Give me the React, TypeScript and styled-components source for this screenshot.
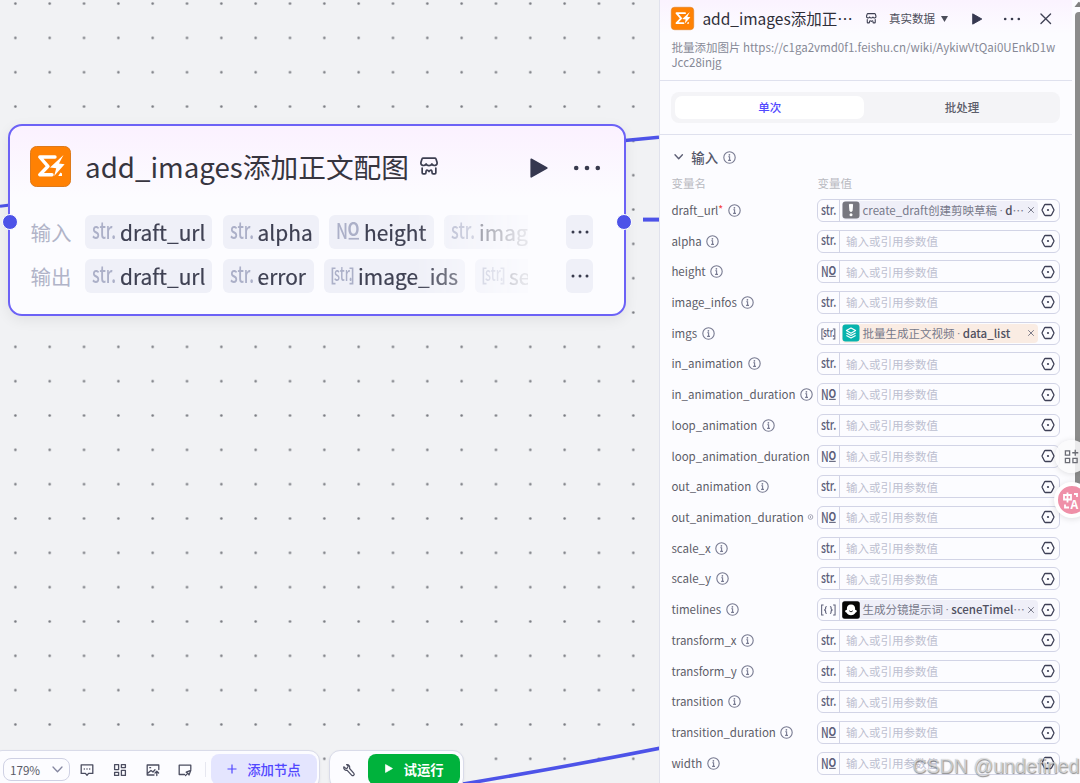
import React from 'react';
import styled, { createGlobalStyle } from 'styled-components';

const Global = createGlobalStyle`
  * { box-sizing: border-box; }
  html, body { margin: 0; padding: 0; overflow: hidden; }
  body { font-family: "Noto Sans CJK SC", "Noto Sans", sans-serif; color: #383743; }
`;

const Page = styled.div`
  position: relative;
  display: grid;
  grid-template-columns: 659px 421px;
  width: 1080px;
  height: 783px;
  overflow: hidden;
  background: #fcfcff;
`;

/* ---------- canvas ---------- */
const Canvas = styled.main`
  position: relative;
  overflow: hidden;
  background-color: #f1f2f4;
  background-image: radial-gradient(circle at 17.17px 17.17px, #75777d 0, #75777d 0.7px, rgba(117, 119, 125, 0) 1.7px);
  background-size: 34.33px 34.33px;
  background-position: -1.8px -13.6px;
`;
const Edges = styled.svg`
  position: absolute;
  left: 0;
  top: 0;
`;
const NodeCard = styled.section`
  position: absolute;
  left: 8.4px;
  top: 124px;
  width: 617.5px;
  height: 191.5px;
  padding: 19px 20px 0 20px;
  border: 2px solid #6c62f6;
  border-radius: 14px;
  background: linear-gradient(#fbf1ff 0, #fcfcff 72px);
  box-shadow: 0 4px 14px rgba(0, 0, 0, 0.07);
`;
const NodeHeader = styled.header`
  display: flex;
  align-items: center;
  height: 42px;
`;
const NodeTitle = styled.h1`
  margin: 0 11px 0 13.7px;
  font-size: 27.7px;
  line-height: 40px;
  font-weight: 400;
  color: #37353f;
  white-space: nowrap;
`;
const Spacer = styled.div`
  flex: 1;
`;
const HeaderActions = styled.div`
  display: flex;
  align-items: center;
  gap: 24.5px;
  padding: 3px 3px 0 0;
`;
const ParamRow = styled.div<{ $top: number }>`
  display: flex;
  align-items: center;
  height: 34px;
  margin-top: ${(p) => p.$top}px;
`;
const ParamLabel = styled.span`
  width: 55px;
  font-size: 20.5px;
  line-height: 34px;
  color: #b1b4c8;
`;
const ChipStrip = styled.div`
  display: flex;
  gap: 10.5px;
  width: 442.5px;
  overflow: hidden;
  mask-image: linear-gradient(90deg, #000 0, #000 330px, rgba(0, 0, 0, 0.12) 438px);
`;
const Chip = styled.span<{ $w: number }>`
  display: flex;
  flex: none;
  align-items: center;
  gap: 3.7px;
  width: ${(p) => p.$w}px;
  height: 34px;
  padding-left: 7px;
  border-radius: 6px;
  background: #eff0f8;
  font-size: 20.9px;
  color: #3f4153;
  -webkit-text-stroke: 0.2px #3f4153;
  white-space: nowrap;
  line-height: 34px;
`;
const MoreChip = styled.span`
  display: grid;
  place-items: center;
  width: 27.5px;
  height: 34px;
  margin-left: 38px;
  border-radius: 6px;
  background: #eff0f8;
`;
const Port = styled.i<{ $x: number }>`
  position: absolute;
  left: ${(p) => p.$x}px;
  top: 213.5px;
  width: 16px;
  height: 16px;
  border: 1px solid #fff;
  border-radius: 50%;
  background: #4d53e8;
`;

/* ---------- bottom toolbars ---------- */
const Dock = styled.div`
  position: absolute;
  left: -8.6px;
  top: 750px;
  display: flex;
  gap: 9px;
`;
const Toolbar = styled.div<{ $w: number; $pad: string }>`
  display: flex;
  align-items: center;
  width: ${(p) => p.$w}px;
  height: 39px;
  padding: ${(p) => p.$pad};
  border: 1px solid #d9dbe9;
  border-radius: 11px;
  background: #fcfcff;
  box-shadow: 0 1px 3px rgba(0, 0, 0, 0.06);
`;
const ZoomSelect = styled.div`
  display: flex;
  align-items: center;
  justify-content: space-between;
  width: 67px;
  height: 23px;
  padding: 0 6px;
  border: 1px solid #cfd1e4;
  border-radius: 8px;
  font-size: 11.7px;
  color: #5a5b68;
`;
const ToolIcons = styled.div`
  display: flex;
  align-items: center;
  gap: 18.7px;
  margin-left: 10.5px;
`;
const Divider = styled.i`
  width: 1px;
  height: 15px;
  margin: 0 5px 0 12.5px;
  background: #e6e7f0;
`;
const ToolButton = styled.button<{ $w: number; $green?: boolean }>`
  display: flex;
  align-items: center;
  justify-content: center;
  gap: ${(p) => (p.$green ? 11 : 10)}px;
  width: ${(p) => p.$w}px;
  height: 31px;
  padding: 0 0 1.4px 0;
  border: 0;
  border-radius: 8px;
  background: ${(p) => (p.$green ? '#00b23c' : '#e4e5fe')};
  color: ${(p) => (p.$green ? '#fff' : '#5147ff')};
  font: ${(p) => (p.$green ? 700 : 500)} 13.4px "Noto Sans CJK SC", sans-serif;
`;

/* ---------- side panel ---------- */
const Panel = styled.aside`
  position: relative;
  z-index: 1;
  display: grid;
  grid-template-columns: 412px 9px;
  height: 783px;
  border-left: 1px solid #e0e2ec;
  background: #fcfcff;
`;
const PanelBody = styled.div`
  display: flex;
  flex-direction: column;
  min-width: 0;
`;
const PanelHead = styled.header`
  height: 80.5px;
  padding: 7px 12px 0 11.4px;
  border-bottom: 1px solid #dfe1ee;
  background: linear-gradient(#fbf3ff 0, #fcfcff 34px);
`;
const HeadLine = styled.div`
  display: flex;
  align-items: center;
  height: 23px;
`;
const PanelTitle = styled.h2`
  width: 151px;
  margin: 0 0 0 8px;
  font-size: 15.5px;
  line-height: 23px;
  font-weight: 400;
  color: #2f2e38;
  white-space: nowrap;
`;
const Gap = styled.span<{ $w: number }>`
  flex: none;
  width: ${(p) => p.$w}px;
`;
const DataMode = styled.span`
  display: flex;
  align-items: center;
  gap: 6px;
  margin: 0 24.5px 0 12px;
  font-size: 11.5px;
  line-height: 23px;
  color: #4c4d5a;
`;
const Description = styled.p`
  margin: 10px 0 0;
  font-size: 11.5px;
  line-height: 15.4px;
  color: #868996;
  white-space: pre;
`;
const ModeBar = styled.div`
  height: 54.5px;
  padding: 11.5px 12.5px 0 10.7px;
  border-bottom: 1px solid #dfe1ee;
`;
const Segments = styled.div`
  display: flex;
  height: 31px;
  padding: 4px;
  border-radius: 8px;
  background: #f4f4f7;
`;
const Segment = styled.div<{ $active?: boolean }>`
  flex: ${(p) => (p.$active ? '0 0 189px' : '1')};
  padding-left: ${(p) => (p.$active ? 1 : 5)}px;
  border-radius: 7px;
  background: ${(p) => (p.$active ? '#fff' : 'transparent')};
  color: ${(p) => (p.$active ? '#5147ff' : '#5c5d6a')};
  font-size: 11.5px;
  font-weight: 500;
  line-height: 23px;
  text-align: center;
`;
const SectionTitle = styled.div`
  display: flex;
  align-items: center;
  gap: 4.5px;
  height: 20px;
  margin-top: 12px;
  padding-left: 12.8px;
  font-size: 13.4px;
  font-weight: 500;
  line-height: 20px;
  color: #55576a;
`;
const ColumnHeads = styled.div`
  display: grid;
  grid-template-columns: 146px 1fr;
  height: 18px;
  margin: 6.5px 0 7.3px;
  padding-left: 11.4px;
  font-size: 11.5px;
  line-height: 18px;
  color: #b9bac1;
`;
const FieldList = styled.div`
  display: flex;
  flex-direction: column;
  gap: 7.72px;
  padding: 0 12px 0 11.4px;
`;
const Field = styled.div`
  display: grid;
  grid-template-columns: 146px 1fr;
  height: 23px;
`;
const FieldName = styled.div`
  display: flex;
  align-items: center;
  gap: 4.5px;
  font-size: 11.5px;
  line-height: 23px;
  color: #5c5d68;
  white-space: nowrap;
`;
const Star = styled.b`
  margin-left: -4.5px;
  font-size: 10px;
  font-weight: 500;
  line-height: 20px;
  align-self: flex-start;
  color: #f54a45;
`;
const InputBox = styled.div`
  display: flex;
  align-items: center;
  min-width: 0;
  height: 23px;
  margin-left: -0.6px;
  border: 1px solid #d2d4e6;
  border-radius: 6px;
`;
const TypeCell = styled.span`
  display: grid;
  flex: none;
  place-items: center;
  width: 22px;
  height: 21px;
  padding: 1px 0 0 0.8px;
  border-right: 1px solid #d2d4e6;
`;
const Placeholder = styled.span`
  flex: 1;
  padding: 0.6px 0 0 6.2px;
  font-size: 11.5px;
  line-height: 21px;
  color: #bdbfd0;
`;
const Ref = styled.span<{ $warm?: boolean }>`
  display: flex;
  flex: none;
  align-items: center;
  width: 196px;
  height: 19px;
  margin: 0 3px 0 2.7px;
  padding-right: 4px;
  border-radius: 4px;
  background: ${(p) => (p.$warm ? '#faece3' : '#efeff8')};
  font-size: 11.5px;
  line-height: 19px;
  color: #77798a;
  white-space: nowrap;
`;
const RefText = styled.span`
  display: flex;
  flex: 1;
  min-width: 0;
  padding-left: 2px;
`;
const RefDot = styled.span`
  width: 8.2px;
  text-align: center;
  font-family: "Liberation Sans", sans-serif;
`;
const RefKey = styled.b`
  font-weight: 500;
  color: #4f5060;
`;
const ScrollTrack = styled.div`
  display: flex;
  flex-direction: column;
  align-items: flex-end;
`;
const ScrollThumb = styled.i`
  width: 6.5px;
  height: 491px;
  margin-top: 3px;
  border-radius: 4px 0 0 4px;
  background: #8b8b8b;
`;
const FloatButton = styled.div<{ $top: number; $left: number; $size: number; $ring: number; $bg: string }>`
  position: absolute;
  z-index: 2;
  left: ${(p) => p.$left}px;
  top: ${(p) => p.$top}px;
  display: grid;
  place-items: center;
  width: ${(p) => p.$size}px;
  height: ${(p) => p.$size}px;
  border: ${(p) => p.$ring}px solid #fff;
  border-radius: 50%;
  background: ${(p) => p.$bg};
  box-shadow: 0 1px 6px rgba(0, 0, 0, 0.12);
`;
const Watermark = styled.div`
  position: absolute;
  z-index: 3;
  left: 912.5px;
  top: 752px;
  font: 19.6px/28px "Liberation Sans", Arial, sans-serif;
  color: rgba(255, 255, 255, 0.55);
  text-shadow: 0.6px 0.6px 1px rgba(80, 80, 80, 0.65), -0.3px -0.3px 0.8px rgba(90, 90, 90, 0.4);
  white-space: nowrap;
`;

/* ---------- icons ---------- */
const Glyph = styled.svg`
  display: block;
  flex: none;
  overflow: visible;
`;
const PluginLogo = ({ size }: { size: number }) => (
  <Glyph width={size} height={size} viewBox="0 0 41 41">
    <rect x="0.5" y="0.5" width="40" height="40" rx="6" fill="#ff8103" stroke="#dd7a1c" />
    <path d="M25 11H9.8L18 20.3L9.8 28.8H22" fill="none" stroke="#fff" strokeWidth="3.4" strokeLinejoin="round" strokeLinecap="round" />
    <path d="M33.5 9L20 21.5L26.2 22.2L24.2 30L34.6 18.2L29 17.4Z" fill="#fff" />
    <path d="M30.5 26.5L32 27.5V30H28.2Z" fill="#fff" />
  </Glyph>
);
const StoreIcon = ({ size, w = 1.9 }: { size: number; w?: number }) => (
  <Glyph width={size} height={size} viewBox="0 0 20 20" fill="none" stroke="#3d3f52" strokeWidth={w} strokeLinejoin="round" strokeLinecap="round">
    <path d="M3.6 1.2H16.4Q17.4 1.2 17.8 2.2L19 6.2C19.4 9.6 15 10.6 13.2 7.8C11.8 10.2 8.2 10.2 6.8 7.8C5 10.6 0.6 9.6 1 6.2L2.2 2.2Q2.6 1.2 3.6 1.2Z" />
    <path d="M2.4 12.4V17.6Q2.4 18.8 3.6 18.8H5.4Q6.6 18.8 6.6 17.6C6.6 13.4 8.6 14.4 10 16.2C11.4 14.4 13.4 13.4 13.4 17.6Q13.4 18.8 14.6 18.8H16.4Q17.6 18.8 17.6 17.6V12.4" />
  </Glyph>
);
const PlayIcon = ({ w, h, color }: { w: number; h: number; color: string }) => (
  <Glyph width={w} height={h} viewBox="0 0 18 20">
    <path d="M1.2 1.2L16.8 10L1.2 18.8Z" fill={color} stroke={color} strokeWidth="1.6" strokeLinejoin="round" />
  </Glyph>
);
const Dots = ({ w, r, step }: { w: number; r: number; step: number }) => (
  <Glyph width={w} height="8" viewBox={`0 0 ${w} 8`} fill="#383a4d">
    <circle cx={w / 2 - step} cy="4" r={r} />
    <circle cx={w / 2} cy="4" r={r} />
    <circle cx={w / 2 + step} cy="4" r={r} />
  </Glyph>
);
const InfoIcon = () => (
  <Glyph width="13" height="13" viewBox="0 0 13 13" fill="none" stroke="#777a91">
    <circle cx="6.5" cy="6.5" r="5.7" strokeWidth="1.1" />
    <path d="M5.3 5.8H6.6V9.3M5.1 9.4H8" strokeWidth="1.1" />
    <circle cx="6.4" cy="3.8" r="0.85" fill="#777a91" stroke="none" />
  </Glyph>
);
const HexIcon = () => (
  <Glyph width="14" height="14" viewBox="0 0 14 14">
    <path d="M4.3 1.5H9.7Q10.2 1.5 10.5 2L12.8 6.5Q13 7 12.8 7.5L10.5 12Q10.2 12.5 9.7 12.5H4.3Q3.8 12.5 3.5 12L1.2 7.5Q1 7 1.2 6.5L3.5 2Q3.8 1.5 4.3 1.5Z" fill="none" stroke="#3d3f55" strokeWidth="1.3" />
    <circle cx="7" cy="7" r="1.1" fill="#3d3f55" />
  </Glyph>
);
const HexSlot = styled.span`
  flex: none;
  margin: 0 3.6px 0 auto;
`;
type Kind = 'str' | 'no' | 'arr' | 'obj';
const TypeIcon = ({ kind, scale, color }: { kind: Kind; scale: number; color: string }) => {
  const w = kind === 'arr' || kind === 'obj' ? 23 : 24;
  return (
    <Glyph width={w * scale} height={22 * scale} viewBox={`0 0 ${w} 22`} fill={color} fontFamily='"Noto Sans CJK SC", sans-serif'>
      {kind === 'str' && <text x="0" y="17.6" fontSize="22.5" fontWeight="500" textLength="24" lengthAdjust="spacingAndGlyphs">str.</text>}
      {kind === 'no' && (
        <>
          <text x="0" y="18.4" fontSize="22" fontWeight="500" textLength="12" lengthAdjust="spacingAndGlyphs">N</text>
          <text x="11.6" y="15.4" fontSize="18" fontWeight="700" textLength="12" lengthAdjust="spacingAndGlyphs">O</text>
          <rect x="12.6" y="16.9" width="10.4" height="1.7" />
        </>
      )}
      {kind === 'arr' && (
        <>
          <path d="M4.5 3.2H1.4V18.6H4.5M18.5 3.2H21.6V18.6H18.5" fill="none" stroke={color} strokeWidth="1.6" />
          <text x="3" y="16" fontSize="19.5" fontWeight="500" textLength="18.5" lengthAdjust="spacingAndGlyphs">str.</text>
        </>
      )}
      {kind === 'obj' && (
        <>
          <path d="M4 3.2H1V18.6H4M19 3.2H22V18.6H19" fill="none" stroke={color} strokeWidth="1.6" />
          <path d="M9 5.4Q7.2 5.4 7.2 7.2V9.2L5.6 10.9L7.2 12.6V14.6Q7.2 16.4 9 16.4M14 5.4Q15.8 5.4 15.8 7.2V9.2L17.4 10.9L15.8 12.6V14.6Q15.8 16.4 14 16.4" fill="none" stroke={color} strokeWidth="1.7" />
        </>
      )}
    </Glyph>
  );
};
const Badge = ({ kind }: { kind: 'draft' | 'batch' | 'bot' }) => (
  <Glyph width="18" height="18" viewBox="0 0 18 18">
    {kind === 'draft' && (
      <>
        <rect x="0.5" y="0.5" width="17" height="17" rx="3" fill="#77777f" />
        <path d="M7.4 3.4H10.6L10 10.2H8Z" fill="#fff" stroke="#fff" strokeLinejoin="round" />
        <circle cx="9" cy="13.8" r="1.5" fill="#fff" />
      </>
    )}
    {kind === 'batch' && (
      <>
        <rect x="0.5" y="0.5" width="17" height="17" rx="3" fill="#06b3ad" />
        <path d="M9 4L13.6 6.6L9 9.2L4.4 6.6ZM4.4 9L9 11.6L13.6 9M4.4 11.4L9 14L13.6 11.4" fill="none" stroke="#fff" strokeWidth="1.1" strokeLinejoin="round" />
      </>
    )}
    {kind === 'bot' && (
      <>
        <rect x="0.2" y="0.2" width="17.6" height="17.6" rx="2.5" fill="#050505" />
        <path d="M9 3.4C11.9 3.4 13.1 5.2 13.1 7.4V8.8C15 9 15.6 11 13.6 11.4C13 13 11 14.2 9 14.2C7 14.2 5 13 4.4 11.4C2.4 11 3 9 4.9 8.8V7.4C4.9 5.2 6.1 3.4 9 3.4Z" fill="#fff" />
        <path d="M7.2 9.8Q9 12 10.8 9.8" fill="none" stroke="#111" strokeWidth="0.9" />
      </>
    )}
  </Glyph>
);
const CloseX = ({ size, w, color }: { size: number; w: number; color: string }) => (
  <Glyph width={size} height={size} viewBox="0 0 12 12" stroke={color} strokeWidth={w} strokeLinecap="round">
    <path d="M1 1L11 11M11 1L1 11" />
  </Glyph>
);
const ToolGlyph = ({ d, dot }: { d: string; dot?: boolean }) => (
  <Glyph width="14" height="14" viewBox="0 0 14 14" fill="none" stroke="#4b4d60" strokeWidth="1.3" strokeLinejoin="round" strokeLinecap="round">
    <path d={d} />
    {dot && <path d="M4.3 5.9V6M7 5.9V6M9.7 5.9V6" strokeWidth="1.5" />}
  </Glyph>
);

/* ---------- data ---------- */
type Param = { kind: Kind; name: string; w: number };
const inputs: Param[] = [
  { kind: 'str', name: 'draft_url', w: 127 },
  { kind: 'str', name: 'alpha', w: 96 },
  { kind: 'no', name: 'height', w: 104.5 },
  { kind: 'str', name: 'image_infos', w: 156 },
];
const outputs: Param[] = [
  { kind: 'str', name: 'draft_url', w: 127 },
  { kind: 'str', name: 'error', w: 91 },
  { kind: 'arr', name: 'image_ids', w: 140.5 },
  { kind: 'arr', name: 'segment_ids', w: 156 },
];
type FieldDef = {
  name: string;
  kind: Kind;
  required?: boolean;
  info?: 'none' | 'tiny';
  value?: { badge: 'draft' | 'batch' | 'bot'; source: string; key: string; more?: boolean; warm?: boolean };
};
const fields: FieldDef[] = [
  { name: 'draft_url', kind: 'str', required: true, value: { badge: 'draft', source: 'create_draft创建剪映草稿', key: 'd', more: true } },
  { name: 'alpha', kind: 'str' },
  { name: 'height', kind: 'no' },
  { name: 'image_infos', kind: 'str' },
  { name: 'imgs', kind: 'arr', value: { badge: 'batch', source: '批量生成正文视频', key: 'data_list', warm: true } },
  { name: 'in_animation', kind: 'str' },
  { name: 'in_animation_duration', kind: 'no' },
  { name: 'loop_animation', kind: 'str' },
  { name: 'loop_animation_duration', kind: 'no', info: 'none' },
  { name: 'out_animation', kind: 'str' },
  { name: 'out_animation_duration', kind: 'no', info: 'tiny' },
  { name: 'scale_x', kind: 'str' },
  { name: 'scale_y', kind: 'str' },
  { name: 'timelines', kind: 'obj', value: { badge: 'bot', source: '生成分镜提示词', key: 'sceneTimel', more: true } },
  { name: 'transform_x', kind: 'str' },
  { name: 'transform_y', kind: 'str' },
  { name: 'transition', kind: 'str' },
  { name: 'transition_duration', kind: 'no' },
  { name: 'width', kind: 'no' },
];

const Params = ({ label, items, top }: { label: string; items: Param[]; top: number }) => (
  <ParamRow $top={top}>
    <ParamLabel>{label}</ParamLabel>
    <ChipStrip>
      {items.map((p) => (
        <Chip key={p.name} $w={p.w}>
          <TypeIcon kind={p.kind} scale={1} color="#acb0c8" />
          {p.name}
        </Chip>
      ))}
    </ChipStrip>
    <MoreChip>
      <Dots w={20} r={1.5} step={7} />
    </MoreChip>
  </ParamRow>
);

const FieldRow = ({ f }: { f: FieldDef }) => (
  <Field>
    <FieldName>
      {f.name}
      {f.required && <Star>*</Star>}
      {!f.info && <InfoIcon />}
      {f.info === 'tiny' && (
        <Glyph width="6" height="6" viewBox="0 0 6 6" fill="none" stroke="#9092a5" strokeWidth="0.8">
          <circle cx="2.5" cy="3" r="2.3" />
          <path d="M2.5 2V4" />
        </Glyph>
      )}
    </FieldName>
    <InputBox>
      <TypeCell>
        <TypeIcon kind={f.kind} scale={0.64} color="#5d6079" />
      </TypeCell>
      {f.value ? (
        <Ref $warm={f.value.warm}>
          <Badge kind={f.value.badge} />
          <RefText>
            {f.value.source}
            <RefDot>·</RefDot>
            <RefKey>{f.value.key}</RefKey>
            {f.value.more && <span>⋯</span>}
          </RefText>
          <CloseX size={6} w={1.8} color="#6d6f80" />
        </Ref>
      ) : (
        <Placeholder>输入或引用参数值</Placeholder>
      )}
      <HexSlot>
        <HexIcon />
      </HexSlot>
    </InputBox>
  </Field>
);

export default function App() {
  return (
    <Page>
      <Global />
      <Canvas>
        <Edges width="659" height="783" fill="none" stroke="#4d53e8">
          <path d="M0 206.3L10 205" strokeWidth="3" />
          <path d="M625 140.5L659 137.2" strokeWidth="3.4" />
          <path d="M643 219.6H659" strokeWidth="4" />
          <path d="M460 784.5Q560 768 660 748.2" strokeWidth="3.6" />
        </Edges>
        <NodeCard>
          <NodeHeader>
            <PluginLogo size={41} />
            <NodeTitle>add_images添加正文配图</NodeTitle>
            <StoreIcon size={18} />
            <Spacer />
            <HeaderActions>
              <PlayIcon w={18} h={20} color="#363850" />
              <Dots w={28} r={2.3} step={10.8} />
            </HeaderActions>
          </NodeHeader>
          <Params label="输入" items={inputs} top={27.5} />
          <Params label="输出" items={outputs} top={10.3} />
        </NodeCard>
        <Port $x={2} />
        <Port $x={616} />
        <Dock>
          <Toolbar $w={329} $pad="0 0 0 10.5px">
            <ZoomSelect>
              179%
              <Glyph width="11" height="7" viewBox="0 0 11 7" fill="none" stroke="#8486a0" strokeWidth="1.3" strokeLinecap="round" strokeLinejoin="round">
                <path d="M1 1L5.5 5.7L10 1" />
              </Glyph>
            </ZoomSelect>
            <ToolIcons>
              <ToolGlyph dot d="M1.2 1.8H12.8V10.4H8.6L7 12.2L5.4 10.4H1.2Z" />
              <ToolGlyph d="M1.6 1.6H5.6V6.6H1.6ZM8.4 1.6H12.4V4.6H8.4ZM1.6 9.4H5.6V12.4H1.6ZM8.4 7.4H12.4V12.4H8.4Z" />
              <ToolGlyph d="M8 12H1.2V2H12.8V6.5M3.8 4.7H4.6M2 10L5 7.4L7 9L9 6.8M10.8 12.5V8.5M9 10L10.8 8.3L12.6 10" />
              <ToolGlyph d="M6.5 11.5H1.2V2.2H12.8V6.5M8.2 9.2L12.8 7.3L11 12L10 10.2ZM7.5 12.5L9.5 10.6" />
            </ToolIcons>
            <Divider />
            <ToolButton $w={106}>
              <Glyph width="10" height="10" viewBox="0 0 10 10" stroke="#5147ff" strokeWidth="1.2">
                <path d="M5 0.5V9.5M0.5 5H9.5" />
              </Glyph>
              添加节点
            </ToolButton>
          </Toolbar>
          <Toolbar $w={135} $pad="0 3px 0 11.5px">
            <Glyph width="14" height="14" viewBox="0 0 14 14" fill="none" stroke="#4b4d60" strokeWidth="1.2" strokeLinejoin="round">
              <path d="M4.6 1.6L6.2 3.2L4.8 5.6L3.6 5.2L1.8 3.8C1.2 5.6 2.8 7.8 5.2 7.3L9.8 12.3C11 13.4 13 11.6 11.9 10.3L7.6 5.5C8.2 3.2 6.8 1.2 4.6 1.6Z" />
            </Glyph>
            <Spacer />
            <ToolButton $w={92.5} $green>
              <PlayIcon w={8} h={9} color="#fff" />
              试运行
            </ToolButton>
          </Toolbar>
        </Dock>
      </Canvas>

      <Panel>
        <PanelBody>
          <PanelHead>
            <HeadLine>
              <PluginLogo size={23} />
              <PanelTitle>add_images添加正⋯</PanelTitle>
              <Gap $w={13} />
              <StoreIcon size={10.5} w={2.1} />
              <DataMode>
                真实数据
                <Glyph width="7" height="7" viewBox="0 0 7 7" fill="#4c4d5a">
                  <path d="M0 1H7L3.5 7Z" />
                </Glyph>
              </DataMode>
              <PlayIcon w={10.5} h={12} color="#363850" />
              <Gap $w={19} />
              <Dots w={20} r={1.3} step={6.8} />
              <Gap $w={18} />
              <CloseX size={11.5} w={1.4} color="#3f4154" />
            </HeadLine>
            <Description>{'批量添加图片 https://c1ga2vmd0f1.feishu.cn/wiki/AykiwVtQai0UEnkD1w\nJcc28injg'}</Description>
          </PanelHead>
          <ModeBar>
            <Segments>
              <Segment $active>单次</Segment>
              <Segment>批处理</Segment>
            </Segments>
          </ModeBar>
          <SectionTitle>
            <Glyph width="14" height="6" viewBox="0 0 14 6" fill="none" stroke="#5d5f75" strokeWidth="1.4" strokeLinecap="round" strokeLinejoin="round">
              <path d="M2 0.8L5.7 4.8L9.4 0.8" />
            </Glyph>
            输入
            <InfoIcon />
          </SectionTitle>
          <ColumnHeads>
            <span>变量名</span>
            <span>变量值</span>
          </ColumnHeads>
          <FieldList>
            {fields.map((f) => (
              <FieldRow key={f.name} f={f} />
            ))}
          </FieldList>
        </PanelBody>
        <ScrollTrack>
          <Glyph width="7" height="9" viewBox="0 0 7 9" fill="#808080">
            <path d="M0.5 7L4 2.4Q5 1.2 6 2.4L7 3.8V7Z" />
          </Glyph>
          <ScrollThumb />
        </ScrollTrack>
      </Panel>

      <FloatButton $top={440} $left={1054.5} $size={33} $ring={0} $bg="rgba(250,250,252,0.86)">
        <Glyph width="15" height="15" viewBox="0 0 16 16" fill="none" stroke="#6b6d75" strokeWidth="1.4">
          <path d="M1.5 2H6V6.5H1.5ZM1.5 10H6V14.5H1.5ZM9.5 10H14V14.5H9.5ZM12 0.8V7.2M8.8 4H15.2" />
        </Glyph>
      </FloatButton>
      <FloatButton $top={482} $left={1053.5} $size={36} $ring={4} $bg="#ef90a8">
        <Glyph width="19" height="19" viewBox="0 0 19 19" fill="none" stroke="#fff" strokeWidth="1.8" fontFamily='"Noto Sans CJK SC", sans-serif'>
          <path d="M2 4H9V8.5H2ZM5.5 1.5V11.5M12 3H15V6M3 13.5V16.5H7" />
          <text x="8.5" y="17.5" fontSize="12" fontWeight="700" fill="#fff" stroke="none">A</text>
        </Glyph>
      </FloatButton>
      <Watermark>CSDN @undefined</Watermark>
    </Page>
  );
}
